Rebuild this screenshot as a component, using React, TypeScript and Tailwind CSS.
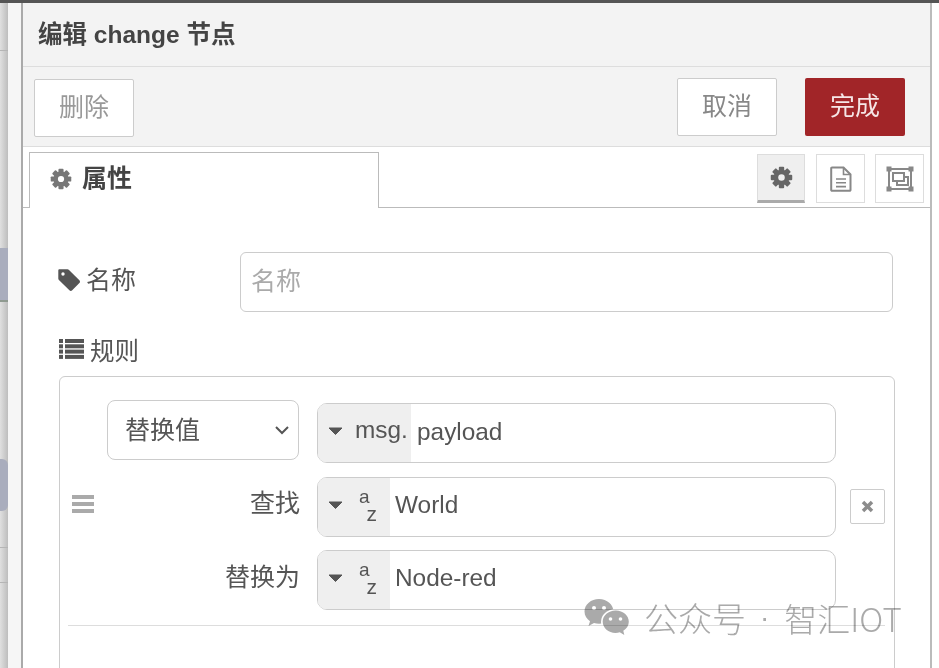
import type { ReactNode } from "react";

const font = "font-['Liberation_Sans','Noto_Sans_CJK_SC',sans-serif]";

function Gear({ size, color, hole }: { size: number; color: string; hole: string }) {
  const teeth = [0, 45, 90, 135];
  return (
    <svg width={size} height={size} viewBox="0 0 24 24" fill={color}>
      {teeth.map((a) => (
        <rect key={a} x="9.2" y="0.8" width="5.6" height="22.4" rx="1" transform={`rotate(${a} 12 12)`} />
      ))}
      <circle cx="12" cy="12" r="8.2" />
      <circle cx="12" cy="12" r="3.4" fill={hole} />
    </svg>
  );
}

function Caret() {
  return (
    <svg width="15" height="8" viewBox="0 0 15 8" className="shrink-0 -mt-[5px]">
      <path d="M1 1h13L7.5 7.5z" fill="#555" stroke="#555" strokeLinejoin="round" />
    </svg>
  );
}

function DocIcon() {
  return (
    <svg width="22" height="26" viewBox="0 0 22 26" fill="none" stroke="#888" strokeWidth="2">
      <path d="M2 1.5h11.5l7 7V24a.8.8 0 0 1-.8.8H2a.8.8 0 0 1-.8-.8V2.3A.8.8 0 0 1 2 1.5z" />
      <path d="M13.5 1.5v7h7M6 13h10M6 16.8h10M6 20.6h10" strokeWidth="1.6" />
    </svg>
  );
}

function GroupIcon() {
  return (
    <svg width="28" height="26" viewBox="0 0 28 26" fill="none" stroke="#888" strokeWidth="2">
      <path d="M3 5v16M25 5v16M5 3h18M5 23h18" />
      <rect x="7" y="7" width="11" height="8" />
      <path d="M18 11h4v8H11v-4" />
      <g fill="#888" stroke="none">
        <rect x="0.5" y="0.5" width="5" height="5" />
        <rect x="22.5" y="0.5" width="5" height="5" />
        <rect x="0.5" y="20.5" width="5" height="5" />
        <rect x="22.5" y="20.5" width="5" height="5" />
      </g>
    </svg>
  );
}

function TagIcon() {
  return (
    <svg width="22" height="23" viewBox="0 0 22 23" className="-ml-px">
      <path
        fillRule="evenodd"
        d="M1.500 0.300h8c.6 0 1.100.2 1.500.6l10.400 10.400c.8.8.8 2 0 2.800l-7.200 7.200c-.8.8-2 .8-2.800 0L.9 11C.5 10.600.3 10.100.3 9.500v-8C.3.800.8.300 1.500.300zM5 3.300a1.700 1.700 0 1 0 0 3.400 1.700 1.700 0 0 0 0-3.400z"
        fill="#555"
      />
    </svg>
  );
}

function ListIcon() {
  return (
    <svg width="25" height="20" viewBox="0 0 25 20" fill="#555" className="-mt-[6px]">
      {[0, 5.300, 10.600, 15.900].map((y) => (
        <g key={y}>
          <rect x="0" y={y} width="4" height="4" />
          <rect x="6" y={y} width="19" height="4" />
        </g>
      ))}
    </svg>
  );
}

function CloseIcon() {
  return (
    <svg width="13" height="13" viewBox="0 0 13 13" stroke="#8c8c8c" strokeWidth="3.500">
      <path d="M2 2l9 9M11 2l-9 9" />
    </svg>
  );
}

function WeChatMark() {
  return (
    <svg width="46" height="40" viewBox="0 0 46 40" className="shrink-0">
      <path d="M15 1C7 1 .5 6.500.5 13.500c0 4 2.200 7.500 5.500 9.800L4.500 28l5.500-2.900c1.600.4 3.200.7 5 .7 8 0 14.500-5.500 14.500-12.300S23 1 15 1z" fill="#aaa" />
      <circle cx="10" cy="10" r="2" fill="#fff" />
      <circle cx="20" cy="10" r="2" fill="#fff" />
      <ellipse cx="31.500" cy="24" rx="14.500" ry="13" fill="#fff" />
      <path d="M31.500 12.500c-7 0-12.800 5-12.800 11.200s5.800 11.200 12.800 11.200c1.500 0 3-.2 4.300-.7l4.500 2.800-1-4.300c3.300-2 5.500-5.300 5.500-9 0-6.200-5.800-11.200-12.800-11.200z" fill="#aaa" />
      <circle cx="26.500" cy="21" r="1.800" fill="#fff" />
      <circle cx="36.500" cy="21" r="1.800" fill="#fff" />
    </svg>
  );
}

function TypedPrefix({ kind }: { kind: "msg" | "str" }) {
  return (
    <div className={`flex items-center bg-[#efefef] h-full rounded-l-[8px] pl-[10px] ${kind === "msg" ? "w-[93px]" : "w-[72px]"}`}>
      <Caret />
      {kind === "msg" ? (
        <span className="ml-[12px] text-[24.400px] text-[#555] -mt-[5px]">msg.</span>
      ) : (
        <span className="ml-[16px] w-[18px] h-[34px] text-[#555] flex flex-col -mt-[4px]">
          <span className="self-start text-[19px] leading-[17px]">a</span>
          <span className="self-end text-[21px] leading-[17px]">z</span>
        </span>
      )}
    </div>
  );
}

function TypedInput({ kind, value }: { kind: "msg" | "str"; value: string }) {
  return (
    <div className="w-[519px] h-[60px] flex items-center border border-[#ccc] rounded-[10px] bg-white">
      <TypedPrefix kind={kind} />
      <span className={`text-[24.400px] text-[#555] ${kind === "msg" ? "ml-[6px] -mt-[2px]" : "ml-[5px] -mt-[4px]"}`}>{value}</span>
    </div>
  );
}

function TabIcon({ active, children }: { active?: boolean; children: ReactNode }) {
  return (
    <div className={`h-[49px] flex items-center justify-center border border-[#ddd] ${active ? "w-[48px] mr-[1px] bg-[#efefef] border-b-[3px] border-b-[#aaa]" : "w-[49px] bg-white"}`}>
      {children}
    </div>
  );
}

function CanvasLine() {
  return <div className="h-px shrink-0 bg-[#b5b5b5]" />;
}

function LeftStrip() {
  return (
    <div className="flex w-[21px] shrink-0 h-full">
      <div className="w-[8px] h-full flex flex-col bg-gradient-to-r from-[#e0e0e0] to-[#bdbdbd]">
        <div className="h-[47px] shrink-0" />
        <CanvasLine />
        <div className="h-[197px] shrink-0" />
        <div className="h-[54px] shrink-0 bg-[#a9adbd] border-b-2 border-b-[#8f9a90]" />
        <div className="h-[157px] shrink-0" />
        <div className="h-[52px] shrink-0 bg-[#a9adbd] rounded-r-[6px]" />
        <div className="h-[36px] shrink-0" />
        <CanvasLine />
        <div className="h-[34px] shrink-0" />
        <CanvasLine />
        <div className="flex-1" />
      </div>
      <div className="w-[13px] h-full bg-[#f6f6f6]" />
    </div>
  );
}

export default function App() {
  return (
    <div className={`w-[939px] h-[668px] overflow-hidden flex flex-col bg-white ${font}`}>
      <div className="h-[3px] shrink-0 bg-[#555]" />
      <div className="flex flex-1 min-h-0">
        <LeftStrip />
        <div className="w-[911px] shrink-0 h-full flex flex-col border-l-2 border-r-2 border-l-[#aaa] border-r-[#bbb] overflow-hidden">
          <div className="h-[64px] shrink-0 bg-[#f3f3f3] border-b border-[#ddd] flex items-center pl-[15px]">
            <h1 className="text-[24.500px] font-bold text-[#444] mt-[2px]">编辑 change 节点</h1>
          </div>
          <div className="h-[80px] shrink-0 bg-[#f3f3f3] border-b border-[#ddd] flex items-center pl-[11px] pr-[25px]">
            <button className="w-[100px] h-[58px] mt-[2px] bg-white border border-[#ccc] rounded-[2px] text-[25px] text-[#999]">删除</button>
            <div className="flex-1" />
            <button className="w-[100px] h-[58px] bg-white border border-[#ccc] rounded-[2px] text-[25px] text-[#888]">取消</button>
            <button className="ml-[28px] w-[100px] h-[58px] bg-[#a12528] rounded-[2px] text-[25px] text-[#f6e6e6]">完成</button>
          </div>
          <div className="h-[61px] shrink-0 bg-white border-b border-[#bbb] flex items-end justify-between pl-[6px] pr-[6px]">
            <div className="w-[350px] h-[56px] -mb-px bg-white border border-b-0 border-[#bbb] flex items-center pl-[20px] pb-[3px]">
              <Gear size={22} color="#777" hole="#fff" />
              <span className="ml-[10px] text-[25px] font-bold text-[#444]">属性</span>
            </div>
            <div className="flex gap-[10px] mb-[4px]">
              <TabIcon active><Gear size={23} color="#666" hole="#efefef" /></TabIcon>
              <TabIcon><DocIcon /></TabIcon>
              <TabIcon><GroupIcon /></TabIcon>
            </div>
          </div>
          <div className="flex-1 min-h-0 bg-white pl-[36px] pr-[35px]">
            <div className="flex items-start mt-[44px]">
              <label className="w-[181px] shrink-0 flex items-center text-[25px] text-[#555] h-[56px]">
                <TagIcon />
                <span className="ml-[6px] mt-[2px]">名称</span>
              </label>
              <div className="w-[653px] h-[60px] border border-[#ccc] rounded-[6px] flex items-center pl-[10px] text-[25px] text-[#aaa]">名称</div>
            </div>
            <div className="flex items-center h-[36px] mt-[22px] text-[25px] text-[#555]">
              <ListIcon />
              <span className="ml-[6px] text-[24.500px]">规则</span>
            </div>
            <div className="mt-[6px] w-[836px] h-[400px] border border-[#ccc] rounded-[6px] relative">
              <div className="flex flex-col pt-[26px]">
                <div className="flex items-center h-[60px] pl-[47px]">
                  <div className="w-[192px] h-[60px] border border-[#ccc] rounded-[8px] flex items-center justify-between pl-[17px] pr-[8px] text-[25px] text-[#555] -mt-[6px]">
                    <span className="mt-[2px]">替换值</span>
                    <svg width="16" height="10" viewBox="0 0 16 10" fill="none"><path d="M2 2l6 6 6-6" stroke="#555" strokeWidth="2" /></svg>
                  </div>
                  <div className="ml-[18px]"><TypedInput kind="msg" value="payload" /></div>
                </div>
                <div className="flex items-center h-[60px] mt-[14px]">
                  <div className="pl-[12px] w-[50px] shrink-0 flex flex-col gap-[3px] -mt-[6px]">
                    <span className="block w-[22px] h-[4px] bg-[#aaa]" />
                    <span className="block w-[22px] h-[4px] bg-[#aaa]" />
                    <span className="block w-[22px] h-[4px] bg-[#aaa]" />
                  </div>
                  <div className="w-[190px] shrink-0 text-right text-[25px] text-[#555] -mt-[6px]">查找</div>
                  <div className="ml-[17px]"><TypedInput kind="str" value="World" /></div>
                  <div className="ml-[14px] -mt-[2px] w-[35px] h-[35px] border border-[#ccc] rounded-[2px] flex items-center justify-center">
                    <CloseIcon />
                  </div>
                </div>
                <div className="flex items-center h-[60px] mt-[13px]">
                  <div className="w-[240px] shrink-0 text-right text-[25px] text-[#555] -mt-[4px]">替换为</div>
                  <div className="ml-[17px]"><TypedInput kind="str" value="Node-red" /></div>
                </div>
                <div className="ml-[8px] w-[817px] h-px bg-[#ddd] mt-[15px]" />
              </div>
              <div className="absolute left-[524px] top-[221px] flex items-center text-[#aaa] mix-blend-multiply">
                <WeChatMark />
                <span className="ml-[14px] text-[34px] font-light whitespace-nowrap font-['Noto_Sans_CJK_SC','Liberation_Sans',sans-serif] leading-[38px]">公众号</span>
                <span className="ml-[14px] text-[28px] leading-[38px]">·</span>
                <span className="ml-[15px] text-[33px] font-light whitespace-nowrap font-['Noto_Sans_CJK_SC','Liberation_Sans',sans-serif] leading-[38px]">智汇IOT</span>
              </div>
            </div>
          </div>
        </div>
        <div className="flex-1 bg-white" />
      </div>
    </div>
  );
}
